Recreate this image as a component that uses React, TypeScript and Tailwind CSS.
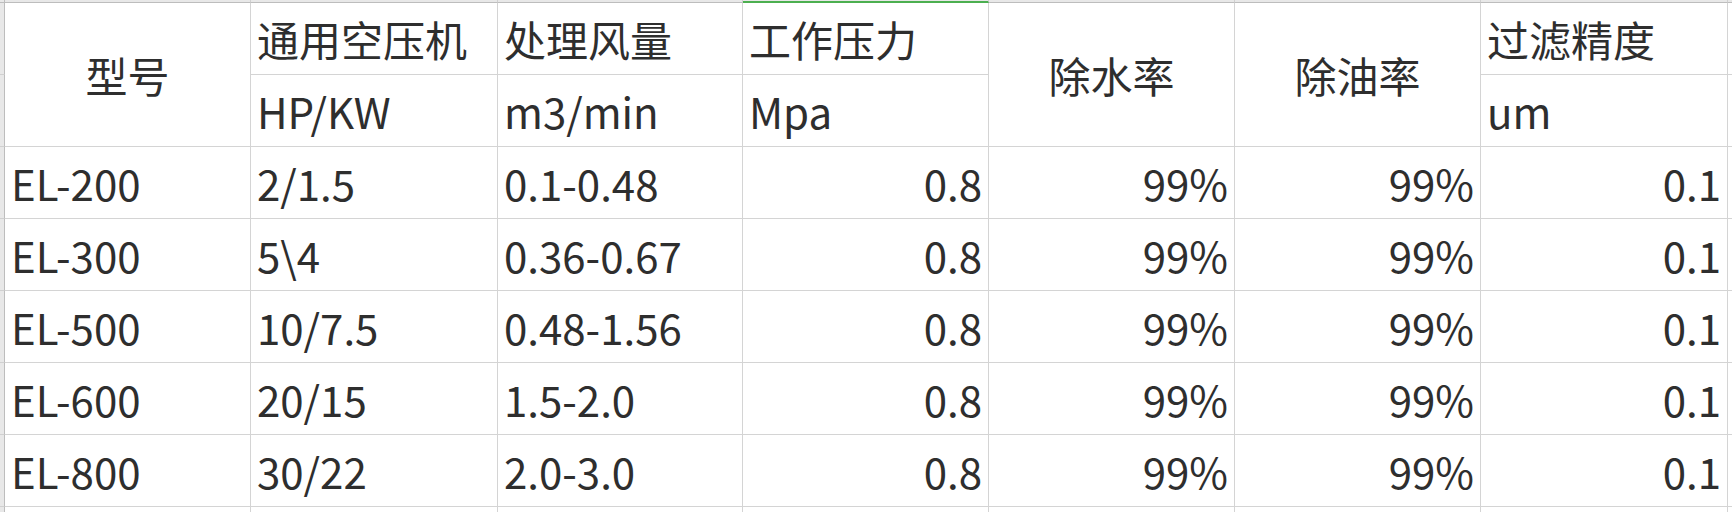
import React from "react";

const LINE = "border-[#d4d4d4]";

type Align = "l" | "r" | "c";

function Cell({
  children,
  align = "l",
  span2 = false,
  noBottom = false,
}: {
  children?: React.ReactNode;
  align?: Align;
  span2?: boolean;
  noBottom?: boolean;
}) {
  const j =
    align === "r" ? "justify-end" : align === "c" ? "justify-center" : "justify-start";
  return (
    <div
      className={`flex items-center ${j} border-r ${noBottom ? "" : "border-b"} ${LINE} bg-white px-[6px] whitespace-nowrap overflow-hidden ${
        span2 ? "row-span-2" : ""
      }`}
    >
      {children}
    </div>
  );
}

function Strip({ last = false }: { last?: boolean }) {
  return (
    <div
      className={`bg-[#e8e8e8] border-r border-[#bdbdbd] ${last ? "" : "border-b border-b-[#d0d0d0]"}`}
    />
  );
}

const rows = [
  ["EL-200", "2/1.5", "0.1-0.48"],
  ["EL-300", "5\\4", "0.36-0.67"],
  ["EL-500", "10/7.5", "0.48-1.56"],
  ["EL-600", "20/15", "1.5-2.0"],
  ["EL-800", "30/22", "2.0-3.0"],
];

export default function App() {
  return (
    <div
      className="w-[1732px] h-[512px] overflow-hidden bg-white text-[#2e2e2e] text-[42px] leading-[normal] grid grid-cols-[5px_246px_247px_245px_246px_246px_246px_247px_1fr] grid-rows-[3px_72px_72px_72px_72px_72px_72px_72px_1fr]"
      style={{ fontFamily: '"Noto Sans CJK SC", "Noto Sans", sans-serif' }}
    >
      {/* top strip */}
      <div className="bg-[#e8e8e8] border-r border-b border-[#bdbdbd]" />
      <div className="bg-[#e8e8e8] border-b border-r border-[#bdbdbd] border-r-[#d0d0d0]" />
      <div className="bg-[#e8e8e8] border-b border-r border-[#bdbdbd] border-r-[#d0d0d0]" />
      <div className="bg-[#e8e8e8] border-b border-r border-[#bdbdbd] border-r-[#d0d0d0]" />
      <div className="bg-[#e8e8e8] border-b-2 border-r border-b-[#4caf50] border-r-[#d0d0d0]" />
      <div className="bg-[#e8e8e8] border-b border-r border-[#bdbdbd] border-r-[#d0d0d0]" />
      <div className="bg-[#e8e8e8] border-b border-r border-[#bdbdbd] border-r-[#d0d0d0]" />
      <div className="bg-[#e8e8e8] border-b border-r border-[#bdbdbd] border-r-[#d0d0d0]" />
      <div className="bg-[#e8e8e8] border-b border-[#bdbdbd]" />

      {/* header row 1 */}
      <Strip />
      <Cell align="c" span2>
        型号
      </Cell>
      <Cell>通用空压机</Cell>
      <Cell>处理风量</Cell>
      <Cell>工作压力</Cell>
      <Cell align="c" span2>
        除水率
      </Cell>
      <Cell align="c" span2>
        除油率
      </Cell>
      <Cell>过滤精度</Cell>
      <div className={`border-b ${LINE}`} />

      {/* header row 2 */}
      <Strip />
      <Cell>HP/KW</Cell>
      <Cell>m3/min</Cell>
      <Cell>Mpa</Cell>
      <Cell>um</Cell>
      <div className={`border-b ${LINE}`} />

      {rows.map((r) => (
        <React.Fragment key={r[0]}>
          <Strip />
          <Cell>{r[0]}</Cell>
          <Cell>{r[1]}</Cell>
          <Cell>{r[2]}</Cell>
          <Cell align="r">0.8</Cell>
          <Cell align="r">99%</Cell>
          <Cell align="r">99%</Cell>
          <Cell align="r">0.1</Cell>
          <div className={`border-b ${LINE}`} />
        </React.Fragment>
      ))}

      {/* trailing partial row */}
      <Strip last />
      <Cell noBottom />
      <Cell noBottom />
      <Cell noBottom />
      <Cell noBottom />
      <Cell noBottom />
      <Cell noBottom />
      <Cell noBottom />
      <div />
    </div>
  );
}
